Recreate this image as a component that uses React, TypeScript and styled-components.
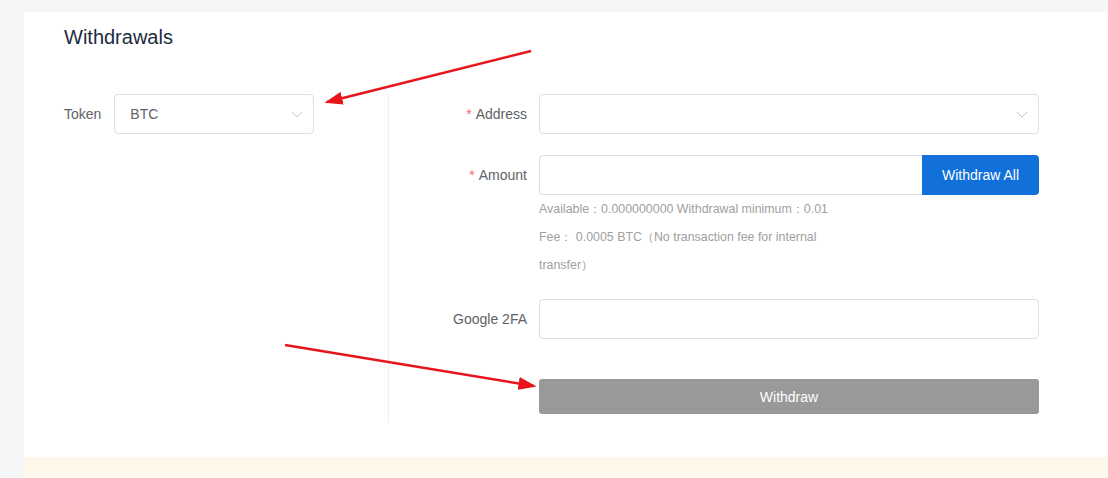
import React from "react";
import styled, { createGlobalStyle } from "styled-components";

const Global = createGlobalStyle`
  html, body { margin: 0; padding: 0; }
  body {
    font-family: "Liberation Sans", Arial, sans-serif;
    background: #f5f6f8;
    overflow: hidden;
  }
  * { box-sizing: border-box; }
`;

const Page = styled.div`
  position: relative;
  width: 1108px;
  height: 478px;
  padding: 12px 0 0 24px;
  background: #f5f6f8;
  overflow: hidden;
`;

const Card = styled.div`
  background: #ffffff;
  border-radius: 4px 0 0 0;
  height: 445px;
  width: 1100px;
`;

const Header = styled.div`
  height: 48px;
  padding: 13px 40px 0;
`;

const Title = styled.h2`
  margin: 0;
  font-size: 20px;
  font-weight: normal;
  color: #1c2b3e;
  line-height: 24px;
`;

const Body = styled.div`
  display: flex;
  padding-top: 34px;
`;

const LeftCol = styled.div`
  width: 365px;
  padding-left: 40px;
  border-right: 1px solid #ebeef5;
  height: 329px;
`;

const RightCol = styled.div`
  display: flex;
  flex-direction: column;
`;

const Row = styled.div<{ $mt?: number }>`
  display: flex;
  align-items: center;
  margin-top: ${(p) => p.$mt ?? 0}px;
`;

const Label = styled.label<{ $w?: number; $right?: boolean; $gap?: number }>`
  width: ${(p) => (p.$w ? `${p.$w}px` : "auto")};
  text-align: ${(p) => (p.$right ? "right" : "left")};
  padding-right: ${(p) => p.$gap ?? 12}px;
  font-size: 14px;
  color: #606266;
  flex-shrink: 0;
`;

const Star = styled.span`
  color: #f56c6c;
  margin-right: 4px;
`;

const Box = styled.div<{ $w: number; $h?: number }>`
  position: relative;
  width: ${(p) => p.$w}px;
  height: ${(p) => p.$h ?? 40}px;
  border: 1px solid #dcdfe6;
  border-radius: 4px;
  background: #fff;
  display: flex;
  align-items: center;
  padding: 0 15px;
  font-size: 14px;
  color: #606266;
`;

const Chevron = styled.svg`
  position: absolute;
  right: 10px;
  top: 50%;
  margin-top: -6px;
  width: 12px;
  height: 12px;
`;

const Group = styled.div`
  display: flex;
  width: 500px;
  height: 40px;
`;

const GroupInput = styled.div`
  flex: 1;
  border: 1px solid #dcdfe6;
  border-right: none;
  border-radius: 4px 0 0 4px;
`;

const BlueButton = styled.button`
  width: 117px;
  border: none;
  border-radius: 0 4px 4px 0;
  background: #1170d9;
  color: #fff;
  font-family: inherit;
  font-size: 14px;
  padding: 0;
`;

const Help = styled.div`
  margin-left: 150px;
  width: 300px;
  font-size: 12.4px;
  line-height: 28px;
  color: #a0a0a0;
`;

const GrayButton = styled.button`
  margin-left: 150px;
  margin-top: 40px;
  width: 500px;
  height: 35px;
  border: none;
  border-radius: 3px;
  background: #999999;
  color: #fff;
  font-family: inherit;
  font-size: 14px;
`;

const Notice = styled.div`
  height: 30px;
  width: 1100px;
  background: #fdf8e9;
`;

const Arrows = styled.svg`
  position: absolute;
  left: 0;
  top: 0;
  pointer-events: none;
`;

const ChevronIcon = () => (
  <Chevron viewBox="0 0 12 12">
    <path d="M1 4 L6 9 L11 4" fill="none" stroke="#c0c4cc" strokeWidth="1" />
  </Chevron>
);

export default function App() {
  return (
    <>
      <Global />
      <Page>
        <Card>
          <Header>
            <Title>Withdrawals</Title>
          </Header>
          <Body>
            <LeftCol>
              <Row>
                <Label $gap={13}>Token</Label>
                <Box $w={200}>
                  BTC
                  <ChevronIcon />
                </Box>
              </Row>
            </LeftCol>
            <RightCol>
              <Row>
                <Label $w={150} $right>
                  <Star>*</Star>Address
                </Label>
                <Box $w={500}>
                  <ChevronIcon />
                </Box>
              </Row>
              <Row $mt={21}>
                <Label $w={150} $right>
                  <Star>*</Star>Amount
                </Label>
                <Group>
                  <GroupInput />
                  <BlueButton>Withdraw All</BlueButton>
                </Group>
              </Row>
              <Help>
                Available：0.000000000 Withdrawal minimum：0.01
                <br />
                Fee： 0.0005 BTC（No transaction fee for internal transfer）
              </Help>
              <Row $mt={20}>
                <Label $w={150} $right>
                  Google 2FA
                </Label>
                <Box $w={500} />
              </Row>
              <GrayButton>Withdraw</GrayButton>
            </RightCol>
          </Body>
        </Card>
        <Notice />
        <Arrows width="1108" height="478" viewBox="0 0 1108 478">
          <defs>
            <marker id="ah" markerWidth="7" markerHeight="5" refX="6" refY="2.5" orient="auto" markerUnits="strokeWidth">
              <path d="M0 0 L7 2.5 L0 5 Z" fill="#e8141b" />
            </marker>
          </defs>
          <line x1="531" y1="51" x2="327" y2="102" stroke="#e8141b" strokeWidth="2.6" markerEnd="url(#ah)" />
          <line x1="285" y1="345" x2="534" y2="386" stroke="#e8141b" strokeWidth="2.6" markerEnd="url(#ah)" />
        </Arrows>
      </Page>
    </>
  );
}
